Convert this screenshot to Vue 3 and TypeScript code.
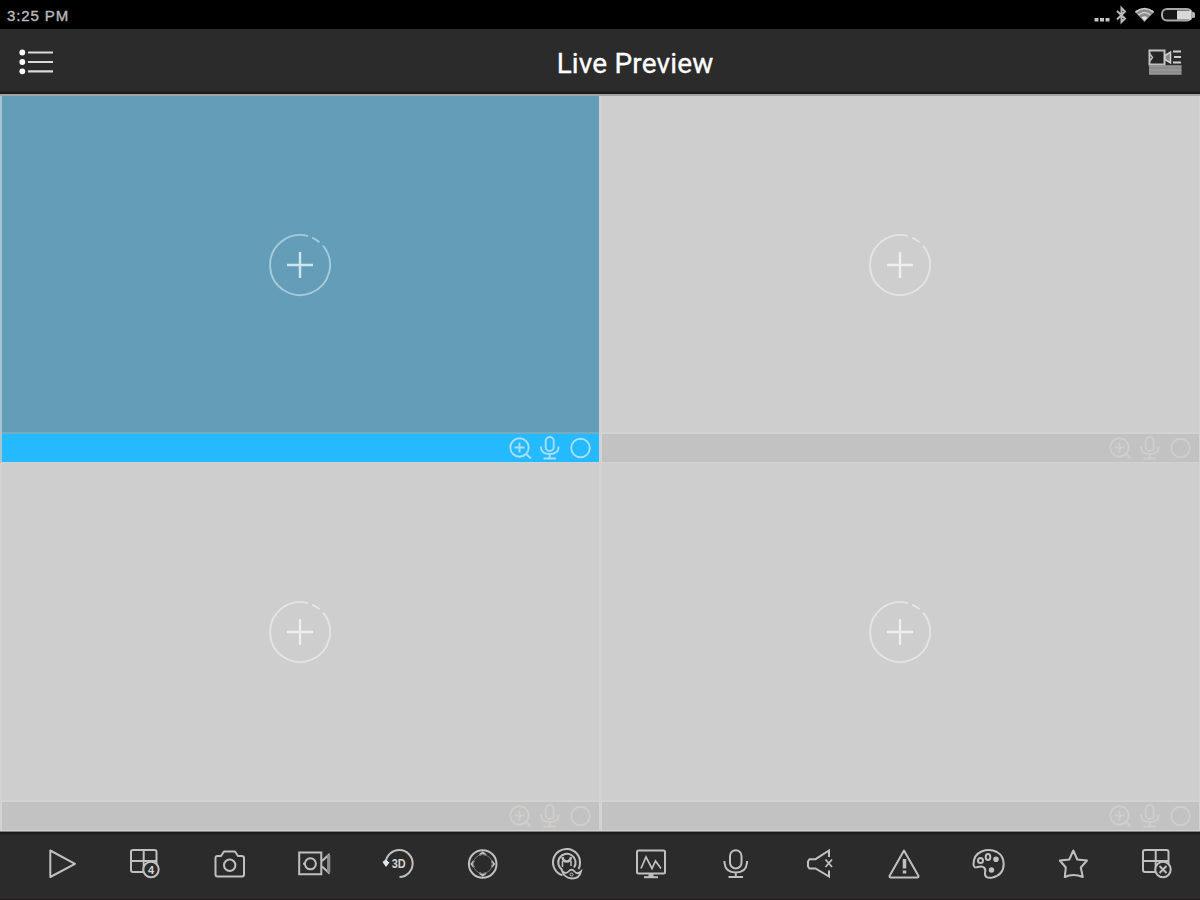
<script setup lang="ts">
interface Channel {
  id: number
  selected: boolean
}

const channels: Channel[] = [
  { id: 1, selected: true },
  { id: 2, selected: false },
  { id: 3, selected: false },
  { id: 4, selected: false },
]

const tools: string[] = [
  'play', 'layout', 'camera', 'record', 'rotate', 'ptz', 'lens',
  'image', 'talk', 'sound', 'alarm', 'palette', 'favorite', 'close',
]
</script>

<template>
  <div class="screen">
    <div class="status">
      <span class="time">3:25 PM</span>
      <svg class="signals" width="104" height="28" viewBox="0 0 104 28">
        <g fill="#c4c4c4">
          <rect x="-1.5" y="18" width="4" height="3.5" />
          <rect x="4" y="18" width="4" height="3.5" />
          <rect x="9.5" y="18" width="4" height="3.5" />
        </g>
        <path d="M21 11 L29 18.500 L25.500 22 V8 L29 11.500 L21 19.500" fill="none" stroke="#b8b8b8" stroke-width="2" />
        <path d="M39 12 Q48.500 4.500 58 12 L48.500 22 Z" fill="#8c8c8c" />
        <path d="M39.500 12 Q48.500 5 57.500 12 M42.500 15 Q48.500 10 54.500 15" fill="none" stroke="#d0d0d0" stroke-width="1.600" />
        <path d="M45.500 17.500 Q48.500 15 51.500 17.500 L48.500 21 Z" fill="#ddd" />
        <rect x="66" y="9" width="30" height="11.500" rx="5" fill="#161616" stroke="#a9a9a9" stroke-width="2" />
        <path d="M81 10.500 H95 V19.500 H81 Z" fill="#d8d8d8" />
        <rect x="96" y="12" width="3" height="6" rx="1.500" fill="#b5b5b5" />
      </svg>
    </div>

    <header class="header">
      <svg class="menu" width="38" height="30" viewBox="0 0 38 30">
        <g fill="#fff"><circle cx="5.300" cy="5.500" r="2.900" /><circle cx="5.300" cy="15" r="2.900" /><circle cx="5.300" cy="24.300" r="2.900" /></g>
        <path d="M11 5.500 H36 M11 15 H36 M11 24.300 H36" stroke="#dadada" stroke-width="2.200" />
      </svg>
      <h1>Live Preview</h1>
      <svg class="devices" width="36" height="30" viewBox="0 0 36 30">
        <path d="M2.500 3.500 H17.500 V17.500 H2.500 Z" fill="#252525" stroke="#c2c2c2" stroke-width="2" />
        <path d="M3 7 L5.500 10.500 L3 14" fill="none" stroke="#bbb" stroke-width="1.500" />
        <path d="M18 8.500 L23.500 5 V16 L18 12.500 Z" fill="#8a8a8a" stroke="#d0d0d0" stroke-width="1.500" />
        <path d="M26 4.500 H34 M27 10 H34 M26 15.500 H34" stroke="#d0d0d0" stroke-width="2" />
        <rect x="2" y="18.500" width="32.500" height="9" fill="#8c8c8c" />
        <path d="M2 19 H34.500 M2 23 H34.500 M2 27 H34.500" stroke="#a0a0a0" stroke-width="1" />
      </svg>
    </header>

    <main class="grid">
      <section v-for="c in channels" :key="c.id" class="cell" :class="{ selected: c.selected }">
        <div class="view">
          <svg class="add" width="64" height="64" viewBox="0 0 64 64" fill="none">
            <path class="ring" d="M40 3.100 A30 30 0 1 0 55 12.700 M44.200 4.600 A30 30 0 0 1 51.500 9.200" stroke-width="1.900" />
            <path class="plus" d="M19 32 H45 M32 19 V45" stroke-width="2.400" />
          </svg>
        </div>
        <div class="bar">
          <svg class="controls" width="98" height="28" viewBox="0 0 98 28" fill="none" stroke-width="1.900">
            <circle cx="18.500" cy="13.500" r="9.200" />
            <path d="M13.500 13.500 H23.500 M18.500 8.500 V18.500 M25 20 L30 24.500" />
            <rect x="44.700" y="3" width="8" height="14" rx="4" />
            <path d="M40 12.500 V14 Q40.500 20 48.700 20 Q57 20 57.500 14 V12.500 M48.700 20 V24 M42.500 24.500 H55" />
            <circle cx="79.500" cy="14" r="9.300" />
          </svg>
        </div>
      </section>
    </main>

    <nav class="toolbar">
      <div v-for="t in tools" :key="t" class="tool">
        <svg width="36" height="36" viewBox="0 0 36 36" fill="none" stroke="#c0c0c0" stroke-width="2">
          <path v-if="t === 'play'" d="M7.300 4.500 V31 L32 17.800 Z" stroke-linejoin="round" />

          <g v-else-if="t === 'layout' || t === 'close'">
            <rect x="4" y="4" width="25.500" height="22" rx="2" />
            <path d="M16.700 4 V26 M4 15 H29.500" />
            <circle cx="24" cy="23.500" r="7.700" fill="#2b2b2b" />
            <text v-if="t === 'layout'" x="24" y="27.500" class="digit">4</text>
            <path v-else d="M20.500 20 L27.500 27 M27.500 20 L20.500 27" />
          </g>

          <g v-else-if="t === 'camera'" stroke-linejoin="round">
            <path d="M5.500 10 H9 L12 5.500 H23 L26 10 H29.500 Q32 10 32 12 V28.500 Q32 30.500 30 30.500 H5.500 Q3.500 30.500 3.500 28.500 V12 Q3.500 10 5.500 10 Z" />
            <circle cx="17.700" cy="19.300" r="5.700" />
          </g>

          <g v-else-if="t === 'record'">
            <path d="M3.200 6.500 H25.300 V28.200 H3.200 Z" />
            <circle cx="14.400" cy="17.800" r="5.500" />
            <path d="M7 17.800 H9" />
            <path d="M26 15 L32.500 9 V26.500 L26 20.500" />
            <path d="M32.800 9 V26.500" stroke="#8c8c8c" stroke-width="3" />
          </g>

          <g v-else-if="t === 'rotate'">
            <path d="M5.700 16.500 A13.500 13.500 0 1 1 19.500 31" />
            <path d="M2.500 16 L5.500 13.500 L9.500 16.500 L6 21 Z" fill="#e4e4e4" stroke="none" />
            <text x="18.700" y="22" class="three-d" textLength="14" lengthAdjust="spacingAndGlyphs">3D</text>
          </g>

          <g v-else-if="t === 'ptz'">
            <circle cx="17.700" cy="18" r="13.800" />
            <path d="M14.500 9 L17.700 6.500 L21 9 M14.500 27 L17.700 29.500 L21 27 M9 14.800 L6.500 18 L9 21.200 M26.500 14.800 L29 18 L26.500 21.200" />
            <circle cx="17.700" cy="18" r="9.500" stroke="#777" stroke-width="1" />
          </g>

          <g v-else-if="t === 'lens'">
            <path d="M13.500 29.300 A13.500 13.500 0 1 1 31 17 Q31 20.500 29.500 23" />
            <path d="M13.500 24 A8.700 8.700 0 1 1 25 21.500" />
            <path d="M13.500 11 Q14 15.500 17.700 15.500 Q21.500 15.500 22 11" stroke-width="2.400" />
            <path d="M13.500 15 V21 M22 15 V20" stroke-width="1.500" />
            <path d="M13 25 Q17 28.500 19.500 25.500 Q22.500 22 25.500 25.500 Q28.500 29 32 25.500 Q30.500 32.500 23 32.500 Q15.500 32 13 25 Z" fill="#2b2b2b" stroke-width="1.800" />
            <circle cx="22.500" cy="28.500" r="1.500" stroke-width="1" />
          </g>

          <g v-else-if="t === 'image'">
            <rect x="4" y="4.500" width="28" height="23" rx="1.500" />
            <path d="M8 22.500 L13 11 L19 22.500 L22.500 15 L28 22.500" stroke-width="1.700" />
            <path d="M18 28 V31" stroke-width="5" />
            <path d="M11 31.200 H25" />
          </g>

          <g v-else-if="t === 'talk'">
            <rect x="13" y="4.200" width="11.500" height="18.300" rx="5.700" />
            <path d="M7.500 15 V17 Q8.500 26.500 18.800 26.500 Q29 26.500 30 17 V15 M18.800 26.500 V31 M11.500 31 H26" />
          </g>

          <g v-else-if="t === 'sound'">
            <path d="M27 11 V4.500 L13.500 13.200 H7.500 L6 15.500 V20.500 L7.500 22.500 H13.500 L27 30.500 V24.500" />
            <path d="M23.500 13.500 L30 21 M30 13.500 L23.500 21" stroke-width="1.800" />
          </g>

          <g v-else-if="t === 'alarm'" stroke-linejoin="round">
            <path d="M18 4.500 L32.500 30 Q32.500 31.500 31 31.500 H5 Q3.500 31.500 3.500 30 Z" />
            <path d="M18.500 13 V22.500 M18.500 24.500 V27.500" stroke-width="3.500" />
          </g>

          <g v-else-if="t === 'palette'">
            <path d="M3.500 18 Q3.500 9 11.500 5.500 Q19.500 2.500 27 6 Q33.700 10 33.700 18 Q33.500 29 22.500 31.500 Q14.500 33 15 27 Q16 23.500 14 21.500 Q11.500 20 8 21 Q3.500 22.500 3.500 18 Z" />
            <circle cx="10.500" cy="14.500" r="2.500" />
            <ellipse cx="18" cy="11" rx="2.300" ry="3" />
            <circle cx="26" cy="13.300" r="1.800" fill="#c3c3c3" />
            <circle cx="21.500" cy="24" r="1.700" fill="#c3c3c3" />
          </g>

          <path v-else-if="t === 'favorite'" d="M18.300 4.500 L22.300 13.500 L32 14.500 L25.800 21.500 L27.800 31 Q18.300 27 9.800 31 L10.800 21.500 L4.800 14.500 L14.300 13.500 Z" stroke-linejoin="round" />
        </svg>
      </div>
    </nav>
  </div>
</template>

<style>
body {
  margin: 0;
}
</style>

<style scoped>
.screen {
  width: 1200px;
  height: 900px;
  display: flex;
  flex-direction: column;
  overflow: hidden;
  background: #2b2b2b;
  font-family: Roboto, "Liberation Sans", sans-serif;
}
.status {
  box-sizing: border-box;
  height: 29px;
  flex: none;
  display: flex;
  align-items: flex-start;
  justify-content: space-between;
  padding-left: 7px;
  background: #000;
}
.time {
  color: #b9b9b9;
  font: 15px/32px "Liberation Sans", sans-serif;
  letter-spacing: 0.9px;
  -webkit-text-stroke: 0.4px #b9b9b9;
}
.signals {
  overflow: visible;
}
.header {
  box-sizing: border-box;
  height: 67px;
  flex: none;
  display: grid;
  grid-template-columns: 1fr auto 1fr;
  align-items: center;
  padding: 0 17px;
  border-bottom: 2px solid #a5a5a5;
  background: linear-gradient(#2b2b2b 0 62px, #191919 64px);
}
.menu {
  margin-top: 1px;
}
.header h1 {
  margin: 4px 0 0 70px;
  color: #fff;
  font-size: 28px;
  line-height: 32px;
  font-weight: 400;
  letter-spacing: 0.15px;
  -webkit-text-stroke: 0.3px #fff;
}
.devices {
  justify-self: end;
}
.grid {
  height: 735px;
  flex: none;
  display: grid;
  grid-template: 367px 368px / 600px 600px;
  background: #cecece;
}
.cell {
  box-sizing: border-box;
  display: flex;
  flex-direction: column;
  border-left: 2px solid #d3d3d3;
  border-right: 1px solid #d3d3d3;
  border-bottom: 1px solid #d2d2d2;
  min-height: 0;
}
.view {
  flex: 1;
  display: flex;
  align-items: center;
  justify-content: center;
  background: #cecece;
}
.add {
  margin: 1px 1px 0 0;
}
.bar {
  height: 28px;
  flex: none;
  display: flex;
  justify-content: flex-end;
  border-top: 2px solid #d2d2d2;
  background: #c2c2c2;
}
.selected {
  border-left-color: #a9c4d1;
}
.selected .view {
  background: #639db7;
}
.selected .bar {
  border-top-color: #72adc6;
  background: #25b9ff;
}
.ring {
  stroke: #e4e4e4;
}
.plus {
  stroke: #eee;
}
.selected .ring {
  stroke: #a5cbdb;
}
.selected .plus {
  stroke: #d0e5ed;
}
.controls {
  stroke: #d0cecb;
}
.selected .controls {
  stroke: #a9def5;
}
.toolbar {
  box-sizing: border-box;
  height: 69px;
  flex: none;
  display: grid;
  grid-template-columns: repeat(14, 1fr);
  padding: 14px 1px 0 19px;
  border-top: 1px solid #808080;
  background: linear-gradient(#191919 0 1px, #2b2b2b 3px 66px, #231a1c 68px);
}
.tool {
  display: flex;
  justify-content: center;
  align-items: flex-start;
}
.digit,
.three-d {
  fill: #d5d5d5;
  stroke: none;
  font-family: "Liberation Sans", sans-serif;
  font-weight: 700;
  text-anchor: middle;
}
.digit {
  font-size: 11px;
}
.three-d {
  font-size: 12px;
}
</style>
